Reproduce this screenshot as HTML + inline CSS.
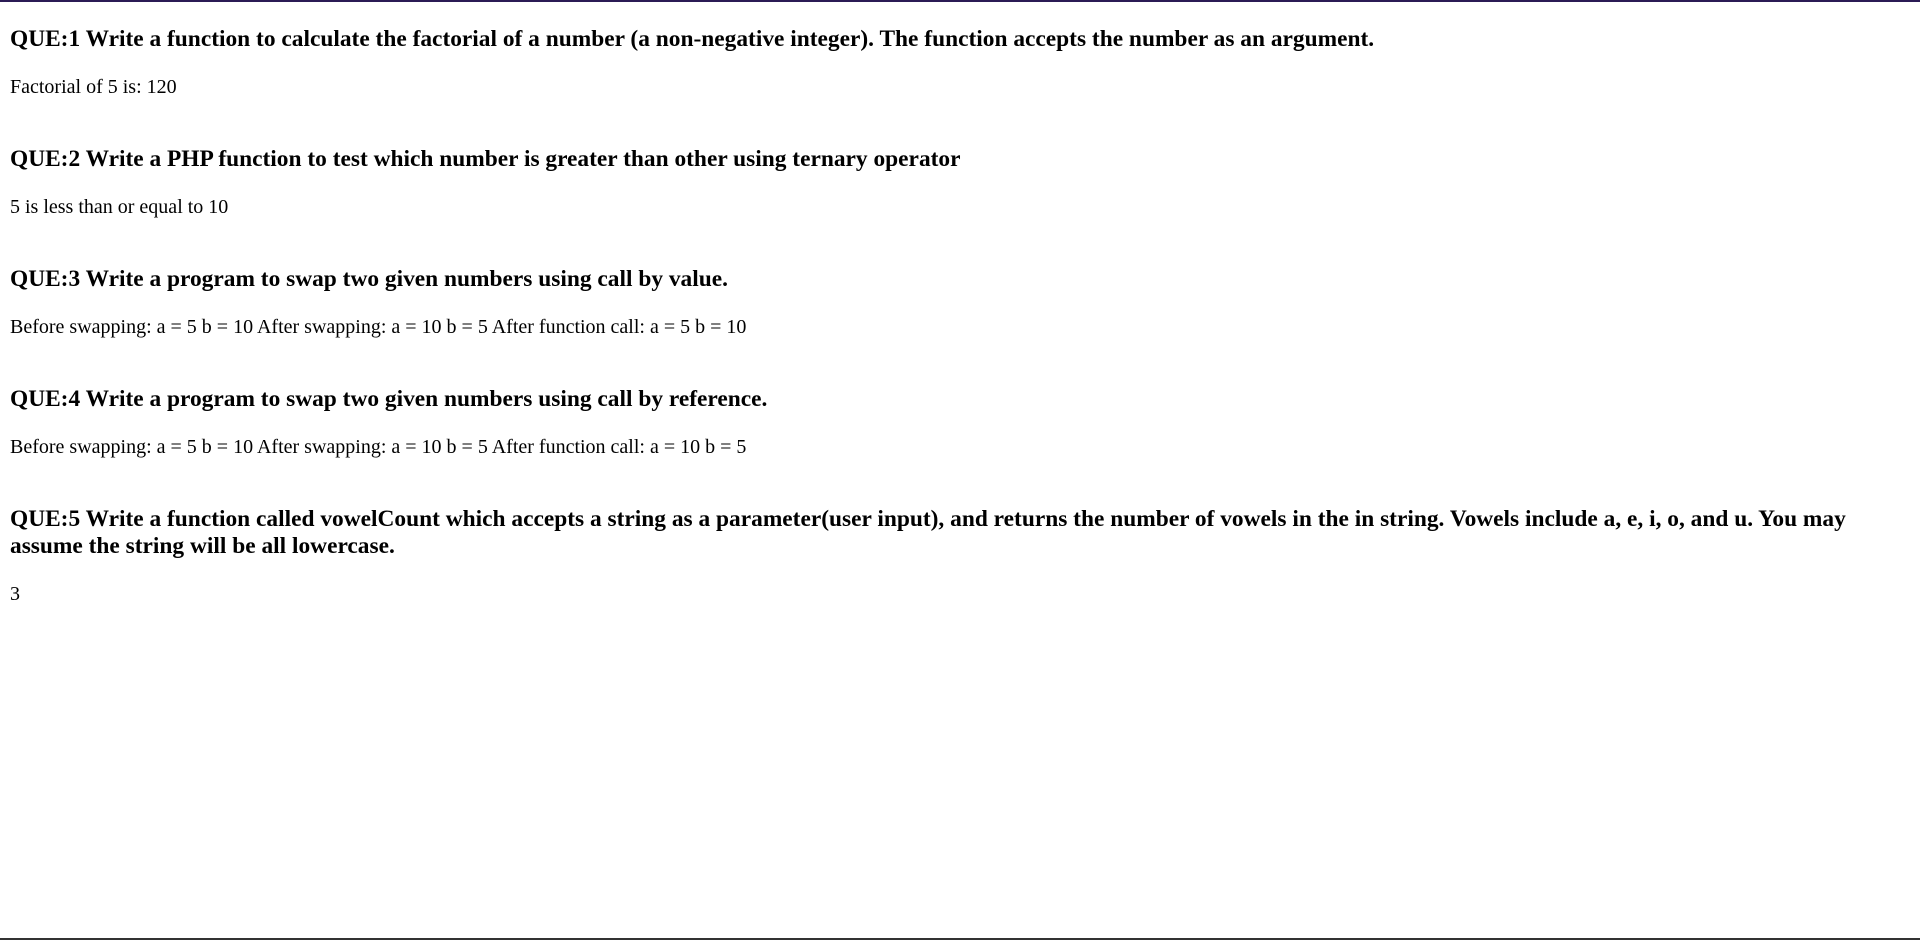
<!DOCTYPE html>
<html><head><meta charset="utf-8"><style>
html,body{margin:0;padding:0;background:#fff;width:1920px;height:940px;overflow:hidden;position:relative;font-family:"Liberation Serif","Times New Roman",serif;color:#000}
.t{position:absolute;left:0;top:0;width:1920px;height:2px;background:#2b1b55}
.b{position:absolute;left:0;bottom:0;width:1920px;height:2px;background:#333}
.h{position:absolute;left:10px;width:1880px;font-weight:bold;font-size:23.4px;line-height:27px}
.p{position:absolute;left:10px;font-size:20px;line-height:24px;white-space:nowrap}
</style></head><body>
<div class="t"></div>
<div class="h" style="top:26px">QUE:1 Write a function to calculate the factorial of a number (a non-negative integer). The function accepts the number as an argument.</div>
<div class="p" style="top:75px">Factorial of 5 is: 120</div>
<div class="h" style="top:146px">QUE:2 Write a PHP function to test which number is greater than other using ternary operator</div>
<div class="p" style="top:195px">5 is less than or equal to 10</div>
<div class="h" style="top:266px">QUE:3 Write a program to swap two given numbers using call by value.</div>
<div class="p" style="top:315px">Before swapping: a = 5 b = 10 After swapping: a = 10 b = 5 After function call: a = 5 b = 10</div>
<div class="h" style="top:386px">QUE:4 Write a program to swap two given numbers using call by reference.</div>
<div class="p" style="top:435px">Before swapping: a = 5 b = 10 After swapping: a = 10 b = 5 After function call: a = 10 b = 5</div>
<div class="h" style="top:506px">QUE:5 Write a function called vowelCount which accepts a string as a parameter(user input), and returns the number of vowels in the in string. Vowels include a, e, i, o, and u. You may assume the string will be all lowercase.</div>
<div class="p" style="top:582px">3</div>
<div class="b"></div>
</body></html>
